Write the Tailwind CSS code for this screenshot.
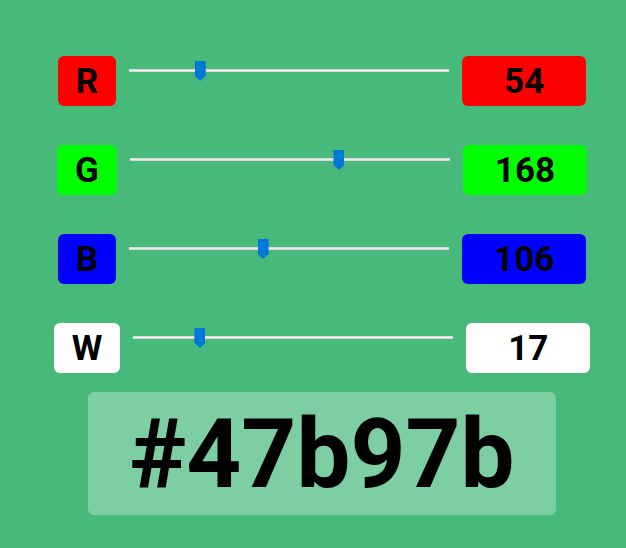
<!DOCTYPE html>
<html lang="en">
<head>
<meta charset="utf-8">
<meta name="viewport" content="width=device-width, initial-scale=1">
<title>RGB Color Mixer</title>
<script src="https://cdn.jsdelivr.net/npm/@tailwindcss/browser@4"></script>
<style>
  input[type="range"]::-webkit-slider-runnable-track { height: 3px; background: #ececec; border: solid #dcdadb; border-width: 1px 0; }
  input[type="range"]::-webkit-slider-thumb {
    -webkit-appearance: none; width: 11px; height: 20px; margin-top: -9px;
    background: #0078d7; clip-path: polygon(0 0, 100% 0, 100% 75%, 50% 100%, 0 75%);
  }
</style>
</head>
<body class="min-h-screen bg-[#47b97b] font-['Roboto',sans-serif] font-bold text-black">
<main class="flex flex-col items-center pt-14 pl-[18px]">
  <form class="flex flex-col items-center gap-[39px] text-[35px] leading-[42px]">
    <div class="flex items-start gap-[13px]">
      <label for="r" class="rounded-md bg-[#ff0000] px-[18px] pt-[5px] pb-[3px]">R</label>
      <input id="r" type="range" min="0" max="255" value="54" class="mt-[5px] h-[19px] w-80 appearance-none bg-transparent">
      <output for="r" class="w-[124px] rounded-md bg-[#ff0000] pt-[5px] pb-[3px] text-center">54</output>
    </div>
    <div class="flex items-start gap-[13px]">
      <label for="g" class="rounded-md bg-[#00ff00] px-[18px] pt-[5px] pb-[3px]">G</label>
      <input id="g" type="range" min="0" max="255" value="168" class="mt-[5px] h-[19px] w-80 appearance-none bg-transparent">
      <output for="g" class="w-[124px] rounded-md bg-[#00ff00] pt-[5px] pb-[3px] text-center">168</output>
    </div>
    <div class="flex items-start gap-[13px]">
      <label for="b" class="rounded-md bg-[#0000ff] px-[18px] pt-[5px] pb-[3px]">B</label>
      <input id="b" type="range" min="0" max="255" value="106" class="mt-[5px] h-[19px] w-80 appearance-none bg-transparent">
      <output for="b" class="w-[124px] rounded-md bg-[#0000ff] pt-[5px] pb-[3px] text-center">106</output>
    </div>
    <div class="flex items-start gap-[13px]">
      <label for="w" class="rounded-md bg-white px-[18px] pt-[5px] pb-[3px]">W</label>
      <input id="w" type="range" min="0" max="86" value="17" class="mt-[5px] h-[19px] w-80 appearance-none bg-transparent">
      <output for="w" class="w-[124px] rounded-md bg-white pt-[5px] pb-[3px] text-center">17</output>
    </div>
  </form>
  <h1 id="hex" class="mt-[19px] rounded-md bg-white/30 px-[41px] pt-[6px] pb-1 text-[96px] leading-[113px]">#47b97b</h1>
</main>
<script>
  const sliders = [...document.querySelectorAll('input[type="range"]')];
  const hex = document.getElementById('hex');
  function update() {
    const [r, g, b, w] = sliders.map(s => Number(s.value));
    sliders.forEach(s => { s.nextElementSibling.textContent = s.value; });
    // White is added equally to each channel.
    const color = '#' + [r, g, b].map(c => Math.min(255, c + w).toString(16).padStart(2, '0')).join('');
    hex.textContent = color;
    document.body.style.backgroundColor = color;
  }
  sliders.forEach(s => s.addEventListener('input', update));
</script>
</body>
</html>
